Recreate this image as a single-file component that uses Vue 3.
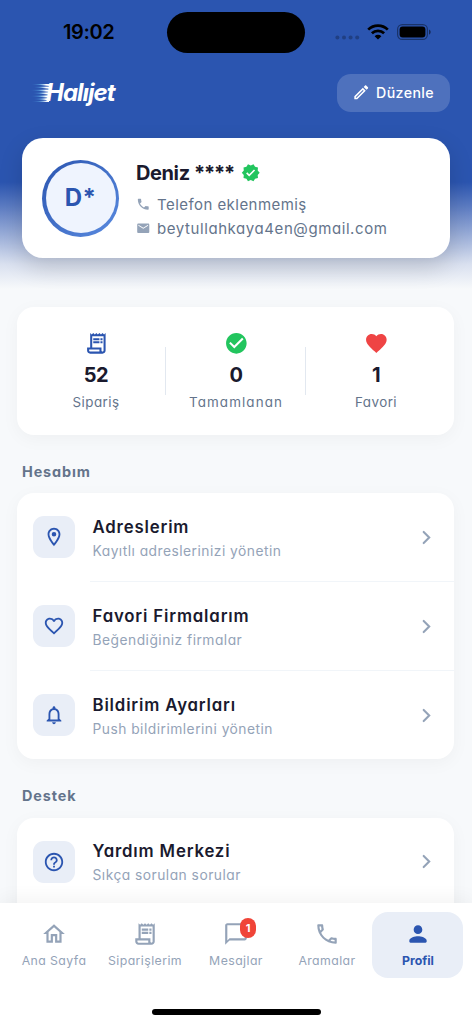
<script setup>
const icons = {
  edit: 'M14.06 9.02l.92.92L5.92 19H5v-.92l9.06-9.06M17.66 3c-.25 0-.51.1-.7.29l-1.83 1.83 3.75 3.75 1.83-1.83c.39-.39.39-1.02 0-1.41l-2.34-2.34c-.2-.2-.45-.29-.71-.29zm-3.6 3.19L3 17.25V21h3.75L17.81 9.94l-3.75-3.75z',
  phone: 'M6.62 10.79c1.44 2.83 3.76 5.14 6.59 6.59l2.2-2.2c.27-.27.67-.36 1.02-.24 1.12.37 2.33.57 3.57.57.55 0 1 .45 1 1V20c0 .55-.45 1-1 1-9.39 0-17-7.61-17-17 0-.55.45-1 1-1h3.5c.55 0 1 .45 1 1 0 1.25.2 2.45.57 3.57.11.35.03.74-.25 1.02l-2.2 2.2z',
  mail: 'M20 4H4c-1.1 0-1.99.9-1.99 2L2 18c0 1.1.9 2 2 2h16c1.1 0 2-.9 2-2V6c0-1.1-.9-2-2-2zm0 4l-8 5-8-5V6l8 5 8-5v2z',
  verified: 'M23 12l-2.44-2.79.34-3.69-3.61-.82-1.89-3.2L12 2.96 8.6 1.5 6.71 4.69 3.1 5.5l.34 3.7L1 12l2.44 2.79-.34 3.7 3.61.82L8.6 22.5l3.4-1.47 3.4 1.46 1.89-3.19 3.61-.82-.34-3.69L23 12zm-12.91 4.72l-3.8-3.81 1.48-1.48 2.32 2.33 5.85-5.87 1.48 1.48-7.33 7.35z',
  receipt: 'M19.5 3.5L18 2l-1.5 1.5L15 2l-1.5 1.5L12 2l-1.5 1.5L9 2 7.5 3.5 6 2v14H3v3c0 1.66 1.34 3 3 3h12c1.66 0 3-1.34 3-3V2l-1.5 1.5zM15 20H6c-.55 0-1-.45-1-1v-1h10v2zm4-1c0 .55-.45 1-1 1s-1-.45-1-1v-3H8V5h11v14zM9 7h6v2H9zm7 0h2v2h-2zM9 10h6v2H9zm7 0h2v2h-2z',
  check: 'M12 2C6.48 2 2 6.48 2 12s4.48 10 10 10 10-4.48 10-10S17.52 2 12 2zm-2 15l-5-5 1.41-1.41L10 14.17l7.59-7.59L19 8l-9 9z',
  heart: 'M12 21.35l-1.45-1.32C5.4 15.36 2 12.28 2 8.5 2 5.42 4.42 3 7.5 3c1.74 0 3.41.81 4.5 2.09C13.09 3.81 14.76 3 16.5 3 19.58 3 22 5.42 22 8.5c0 3.78-3.4 6.86-8.55 11.54L12 21.35z',
  heartLine: 'M16.5 3c-1.74 0-3.41.81-4.5 2.09C10.91 3.81 9.24 3 7.5 3 4.42 3 2 5.42 2 8.5c0 3.78 3.4 6.86 8.55 11.54L12 21.35l1.45-1.32C18.6 15.36 22 12.28 22 8.5 22 5.42 19.58 3 16.5 3zm-4.4 15.55l-.1.1-.1-.1C7.14 14.24 4 11.39 4 8.5 4 6.5 5.5 5 7.5 5c1.54 0 3.04.99 3.57 2.36h1.87C13.46 5.99 14.96 5 16.5 5c2 0 3.5 1.5 3.5 3.5 0 2.89-3.14 5.74-7.9 10.05z',
  pin: 'M12 2C8.13 2 5 5.13 5 9c0 5.25 7 13 7 13s7-7.75 7-13c0-3.87-3.13-7-7-7zM7 9c0-2.76 2.24-5 5-5s5 2.24 5 5c0 2.88-2.88 7.19-5 9.88C9.92 16.21 7 11.85 7 9zM12 6.5a2.5 2.5 0 1 1 0 5a2.5 2.5 0 1 1 0-5z',
  bell: 'M12 22c1.1 0 2-.9 2-2h-4c0 1.1.9 2 2 2zm6-6v-5c0-3.07-1.63-5.64-4.5-6.32V4c0-.83-.67-1.5-1.5-1.5s-1.5.67-1.5 1.5v.68C7.64 5.36 6 7.92 6 11v5l-2 2v1h16v-1l-2-2zm-2 1H8v-6c0-2.48 1.51-4.5 4-4.5s4 2.02 4 4.5v6z',
  help: 'M11 18h2v-2h-2v2zm1-16C6.48 2 2 6.48 2 12s4.48 10 10 10 10-4.48 10-10S17.52 2 12 2zm0 18c-4.41 0-8-3.59-8-8s3.59-8 8-8 8 3.59 8 8-3.59 8-8 8zm0-14c-2.21 0-4 1.79-4 4h2c0-1.1.9-2 2-2s2 .9 2 2c0 2-3 1.75-3 5h2c0-2.25 3-2.5 3-5 0-2.21-1.79-4-4-4z',
  home: 'M12 5.69l5 4.5V18h-2v-6H9v6H7v-7.81l5-4.5M12 3L2 12h3v8h6v-6h2v6h6v-8h3L12 3z',
  chat: 'M20 2H4c-1.1 0-2 .9-2 2v18l4-4h14c1.1 0 2-.9 2-2V4c0-1.1-.9-2-2-2zm0 14H6l-2 2V4h16v12z',
  call: 'M6.54 5c.06.89.21 1.76.45 2.59l-1.2 1.2c-.41-1.2-.67-2.47-.76-3.79h1.51m9.86 12.02c.85.24 1.72.39 2.6.45v1.49c-1.32-.09-2.59-.35-3.8-.75l1.2-1.19M7.5 3H4c-.55 0-1 .45-1 1 0 9.39 7.61 17 17 17 .55 0 1-.45 1-1v-3.49c0-.55-.45-1-1-1-1.24 0-2.45-.2-3.57-.57-.1-.04-.21-.05-.31-.05-.26 0-.51.1-.71.29l-2.2 2.2c-2.83-1.45-5.15-3.76-6.59-6.59l2.2-2.2c.28-.28.36-.67.25-1.02C8.7 6.45 8.5 5.25 8.5 4c0-.55-.45-1-1-1z',
  person: 'M12 12c2.21 0 4-1.79 4-4s-1.79-4-4-4-4 1.79-4 4 1.79 4 4 4zm0 2c-2.67 0-8 1.34-8 4v1c0 .55.45 1 1 1h14c.55 0 1-.45 1-1v-1c0-2.66-5.33-4-8-4z',
}

const stats = [
  { icon: 'receipt', tone: 'blue', value: '52', label: 'Sipariş' },
  { icon: 'check', tone: 'green', value: '0', label: 'Tamamlanan', wide: true },
  { icon: 'heart', tone: 'red', value: '1', label: 'Favori' },
]

const sections = [
  {
    title: 'Hesabım',
    rows: [
      { icon: 'pin', title: 'Adreslerim', sub: 'Kayıtlı adreslerinizi yönetin' },
      { icon: 'heartLine', title: 'Favori Firmalarım', sub: 'Beğendiğiniz firmalar' },
      { icon: 'bell', title: 'Bildirim Ayarları', sub: 'Push bildirimlerini yönetin' },
    ],
  },
  {
    title: 'Destek',
    rows: [{ icon: 'help', title: 'Yardım Merkezi', sub: 'Sıkça sorulan sorular' }],
  },
]

const tabs = [
  { icon: 'home', label: 'Ana Sayfa' },
  { icon: 'receipt', label: 'Siparişlerim' },
  { icon: 'chat', label: 'Mesajlar', badge: 1 },
  { icon: 'call', label: 'Aramalar' },
  { icon: 'person', label: 'Profil', active: true },
]
</script>

<template>
  <div class="screen">
    <div class="statusbar">
      <span class="clock">19:02</span>
      <span class="island"></span>
      <span class="indicators">
        <svg class="dots" viewBox="0 0 25 5"><circle v-for="n in 4" :key="n" :cx="n * 6.6 - 4.2" cy="2.5" r="2" /></svg>
        <svg class="wifi" viewBox="0 0 22 16">
          <path d="M1.2 5.6a14 14 0 0 1 19.6 0M4.9 9.3a8.8 8.8 0 0 1 12.2 0" />
          <path class="solid" d="M11 15.6l-3.4-3.4a4.9 4.9 0 0 1 6.8 0z" />
        </svg>
        <svg class="battery" viewBox="0 0 34 16">
          <rect class="shell" x=".6" y=".6" width="29.8" height="14.8" rx="4.6" />
          <rect x="2.6" y="2.6" width="25.8" height="10.8" rx="3" />
          <path class="tip" d="M32 5.4c2.2.8 2.2 4.4 0 5.2z" />
        </svg>
      </span>
    </div>

    <header class="topbar">
      <div class="logo">
        <svg class="speed" viewBox="0 0 22 18">
          <defs>
            <linearGradient id="streak" gradientUnits="userSpaceOnUse" x1="0" x2="20" y1="0" y2="0">
              <stop offset="0" stop-color="#4fa3e6" stop-opacity="0" />
              <stop offset=".45" stop-color="#62b4ee" stop-opacity=".6" />
              <stop offset=".8" stop-color="#fff" />
            </linearGradient>
          </defs>
          <path
            fill="url(#streak)"
            d="M1 0H22L21.6 2.2zM4 3L21.5 2.6L21 5zM0 6L21 5.4L20.5 7.9zM3 9L20.5 8.3L20 10.8zM0 12L20 11.2L19.5 13.7zM4 14.9L19.5 14.1L19 16.2zM1 17.6L19 16.4V18z"
          />
        </svg>
        <span class="wordmark">Halıjet</span>
      </div>
      <button class="edit">
        <svg viewBox="0 0 24 24"><path :d="icons.edit" /></svg>
        <span>Düzenle</span>
      </button>
    </header>

    <section class="profile">
      <div class="avatar"><span>D*</span></div>
      <div class="identity">
        <div class="name">
          <span>Deniz <span class="stars">****</span></span>
          <svg viewBox="0 0 24 24"><path :d="icons.verified" /></svg>
        </div>
        <div class="contact tel">
          <svg viewBox="0 0 24 24"><path :d="icons.phone" /></svg>
          <span>Telefon eklenmemiş</span>
        </div>
        <div class="contact">
          <svg viewBox="0 0 24 24"><path :d="icons.mail" /></svg>
          <span class="address">beytullahkaya4en@gmail.com</span>
        </div>
      </div>
    </section>

    <section class="stats">
      <div v-for="s in stats" :key="s.label" class="stat">
        <svg :class="s.tone" viewBox="0 0 24 24"><path :d="icons[s.icon]" fill-rule="evenodd" /></svg>
        <strong>{{ s.value }}</strong>
        <span :class="{ wide: s.wide }">{{ s.label }}</span>
      </div>
    </section>

    <section v-for="sec in sections" :key="sec.title" class="group">
      <h2>{{ sec.title }}</h2>
      <div class="card">
        <div v-for="r in sec.rows" :key="r.title" class="row">
          <span class="tile"><svg viewBox="0 0 24 24"><path :d="icons[r.icon]" /></svg></span>
          <div class="body">
            <div class="copy">
              <div class="title">{{ r.title }}</div>
              <div class="sub">{{ r.sub }}</div>
            </div>
            <svg class="chevron" viewBox="0 0 24 24"><path d="M9.3 6.7L14.6 12l-5.3 5.3" /></svg>
          </div>
        </div>
      </div>
    </section>

    <nav class="tabbar">
      <div class="tabs">
        <div v-for="t in tabs" :key="t.label" class="tab" :class="{ active: t.active }">
          <span class="glyph">
            <svg viewBox="0 0 24 24"><path :d="icons[t.icon]" /></svg>
            <span v-if="t.badge" class="badge">{{ t.badge }}</span>
          </span>
          <span class="label">{{ t.label }}</span>
        </div>
      </div>
      <div class="grabber"></div>
    </nav>
  </div>
</template>

<style>
body {
  background: #f7f9fb;
}
</style>

<style scoped>
.screen {
  position: relative;
  box-sizing: border-box;
  width: 472px;
  height: 1024px;
  overflow: hidden;
  font-family: Inter, "Noto Sans", sans-serif;
  font-feature-settings: "cv11";
  color: #1a1a2e;
  background: linear-gradient(#2b55b0 0, #2b55b0 182px, #5b7bc2 206px, #d9e0ef 264px, #f7f9fb 289px);
}
svg {
  display: block;
  flex: none;
  fill: currentColor;
}

.statusbar {
  display: grid;
  grid-template-columns: 167px 138px 1fr;
  height: 65px;
  color: #000;
}
.clock {
  padding: 20px 0 0 63px;
  font-size: 20px;
  font-weight: 600;
  line-height: 25px;
  letter-spacing: -0.4px;
}
.island {
  height: 41px;
  margin-top: 12px;
  border-radius: 21px;
  background: #000;
}
.indicators {
  display: flex;
  height: 16px;
  margin-top: 24px;
  padding-left: 30px;
}
.dots {
  width: 25px;
  height: 5px;
  margin-top: 11px;
  opacity: 0.25;
}
.wifi {
  width: 22px;
  height: 16px;
  margin-left: 7px;
  fill: none;
  stroke: #000;
  stroke-width: 2.7;
}
.wifi .solid {
  fill: #000;
  stroke: none;
}
.battery {
  width: 34px;
  height: 16px;
  margin-left: 8px;
}
.battery .shell {
  fill: none;
  stroke: #000;
  stroke-width: 1.2;
  opacity: 0.4;
}
.battery .tip {
  opacity: 0.5;
}

.topbar {
  display: flex;
  align-items: center;
  justify-content: space-between;
  height: 55px;
  padding: 0 22px 0 30px;
}
.logo {
  display: flex;
  align-items: center;
  color: #fff;
}
.speed {
  width: 22px;
  height: 18px;
  margin-right: -6px;
}
.wordmark {
  font-size: 24px;
  font-weight: 700;
  font-style: italic;
  font-feature-settings: normal;
  letter-spacing: -1px;
  line-height: 30px;
}
.edit {
  display: flex;
  align-items: center;
  box-sizing: border-box;
  width: 113px;
  height: 38px;
  padding: 0 0 0 15px;
  border: 0;
  border-radius: 14px;
  background: rgba(255, 255, 255, 0.17);
  color: #fff;
  font: 500 14.2px/20px Inter, sans-serif;
  letter-spacing: 0.4px;
}
.edit svg {
  width: 18.5px;
  height: 18.5px;
  margin-right: 5.5px;
}

.profile {
  display: flex;
  box-sizing: border-box;
  height: 120px;
  margin: 18px 22px 0;
  padding: 21.5px 20px;
  border-radius: 21px;
  background: #fff;
  box-shadow: 0 9px 23px rgba(0, 0, 0, 0.15);
}
.avatar {
  display: flex;
  flex: none;
  box-sizing: border-box;
  width: 77px;
  height: 77px;
  padding: 3.5px;
  border-radius: 50%;
  background: linear-gradient(135deg, #2b55b0, #5a8be0);
}
.avatar span {
  flex: 1;
  border-radius: 50%;
  background: #eff4fe;
  color: #2b55b0;
  font-size: 24px;
  font-weight: 700;
  line-height: 70px;
  letter-spacing: 0.5px;
  text-align: center;
}
.identity {
  margin-left: 17px;
}
.name {
  display: flex;
  align-items: center;
  height: 26px;
  font-size: 20px;
  font-weight: 700;
  letter-spacing: -0.4px;
}
.stars {
  letter-spacing: -1.2px;
}
.name svg {
  width: 19.5px;
  height: 19.5px;
  margin-left: 7px;
  color: #22c55e;
}
.contact {
  display: flex;
  align-items: center;
  height: 24px;
  color: #64748b;
  font-size: 15px;
  letter-spacing: 0.45px;
}
.address {
  letter-spacing: 0.58px;
}
.tel {
  margin-top: 6.5px;
}
.contact svg {
  width: 14.5px;
  height: 14.5px;
  margin-right: 6.5px;
  color: #94a3b8;
}

.stats {
  display: grid;
  grid-template-columns: repeat(3, 140px);
  justify-content: center;
  box-sizing: border-box;
  height: 128px;
  margin: 48.5px 18px 0 17px;
  border-radius: 17px;
  background: #fff;
  box-shadow: 0 4px 18px rgba(0, 0, 0, 0.04);
}
.stat {
  display: flex;
  flex-direction: column;
  align-items: center;
  padding: 24px 0 0 1px;
  background: linear-gradient(#e2e8f0, #e2e8f0) right 0 top 40px / 1px 48px no-repeat;
}
.stat:last-child {
  background: none;
}
.stat svg {
  width: 24.7px;
  height: 24.7px;
}
.blue {
  color: #2b55b0;
}
.green {
  color: #22c55e;
}
.red {
  color: #ef4444;
}
.stat strong {
  margin-top: 7.3px;
  font-size: 20px;
  font-weight: 700;
  line-height: 26px;
  letter-spacing: -0.4px;
}
.stat span {
  margin-top: 4.5px;
  color: #64748b;
  font-size: 13.4px;
  line-height: 18px;
  letter-spacing: 0.45px;
}
.stat .wide {
  letter-spacing: 1.1px;
}

h2 {
  margin: 0 0 0 22px;
  padding: 27px 0 11.5px;
  color: #64748b;
  font-size: 14.4px;
  font-weight: 700;
  line-height: 20px;
  letter-spacing: 0.9px;
}
.card {
  margin: 0 18px 0 17px;
  border-radius: 17px;
  background: #fff;
  box-shadow: 0 4px 18px rgba(0, 0, 0, 0.04);
}
/* The last card carries on underneath the tab bar. */
.group:last-of-type .card {
  padding-bottom: 30px;
}
.row {
  display: flex;
  align-items: center;
  height: 88px;
  padding-left: 16px;
}
.row + .row {
  height: 89px;
}
.tile {
  display: grid;
  place-items: center;
  width: 42px;
  height: 42px;
  border-radius: 11px;
  background: #e9eef7;
  color: #2b55b0;
}
.tile svg {
  width: 22px;
  height: 22px;
}
.body {
  display: flex;
  flex: 1;
  align-items: center;
  justify-content: space-between;
  box-sizing: border-box;
  height: 100%;
  margin-left: 15px;
  padding: 0 15.5px 0 2.5px;
}
.row + .row .body {
  border-top: 1px solid #f1f5f9;
}
.copy {
  padding-top: 3px;
}
.title {
  font-size: 16.8px;
  font-weight: 600;
  line-height: 24px;
  letter-spacing: 0.83px;
}
.sub {
  color: #94a3b8;
  font-size: 13.8px;
  line-height: 24px;
  letter-spacing: 0.48px;
}
.chevron {
  width: 25px;
  height: 25px;
  fill: none;
  stroke: #94a3b8;
  stroke-width: 2;
  stroke-linecap: round;
}

.tabbar {
  position: absolute;
  right: 0;
  bottom: 0;
  left: 0;
  height: 121px;
  background: #fff;
  box-shadow: 0 -4px 18px rgba(0, 0, 0, 0.05);
}
.tabs {
  display: grid;
  grid-template-columns: repeat(5, 91px);
  padding: 9px 0 0 8px;
}
.tab {
  display: flex;
  flex-direction: column;
  align-items: center;
  box-sizing: border-box;
  height: 66px;
  padding: 9px 0 0 1px;
  border-radius: 16px;
  color: #94a3b8;
}
.glyph {
  position: relative;
}
.glyph svg {
  width: 26px;
  height: 26px;
}
.badge {
  position: absolute;
  top: -3px;
  left: 17px;
  width: 16px;
  height: 20px;
  border-radius: 8px;
  background: #f04438;
  color: #fff;
  font-size: 11px;
  font-weight: 700;
  line-height: 20px;
  text-align: center;
}
.label {
  margin-top: 4.5px;
  font-size: 12.3px;
  line-height: 18px;
  letter-spacing: 0.42px;
}
.active {
  background: #e9eef7;
  color: #2b55b0;
}
.active .label {
  font-weight: 700;
  letter-spacing: 0;
}
.grabber {
  width: 169px;
  height: 5.5px;
  margin: 31px auto 0;
  border-radius: 3px;
  background: #000;
}
</style>
